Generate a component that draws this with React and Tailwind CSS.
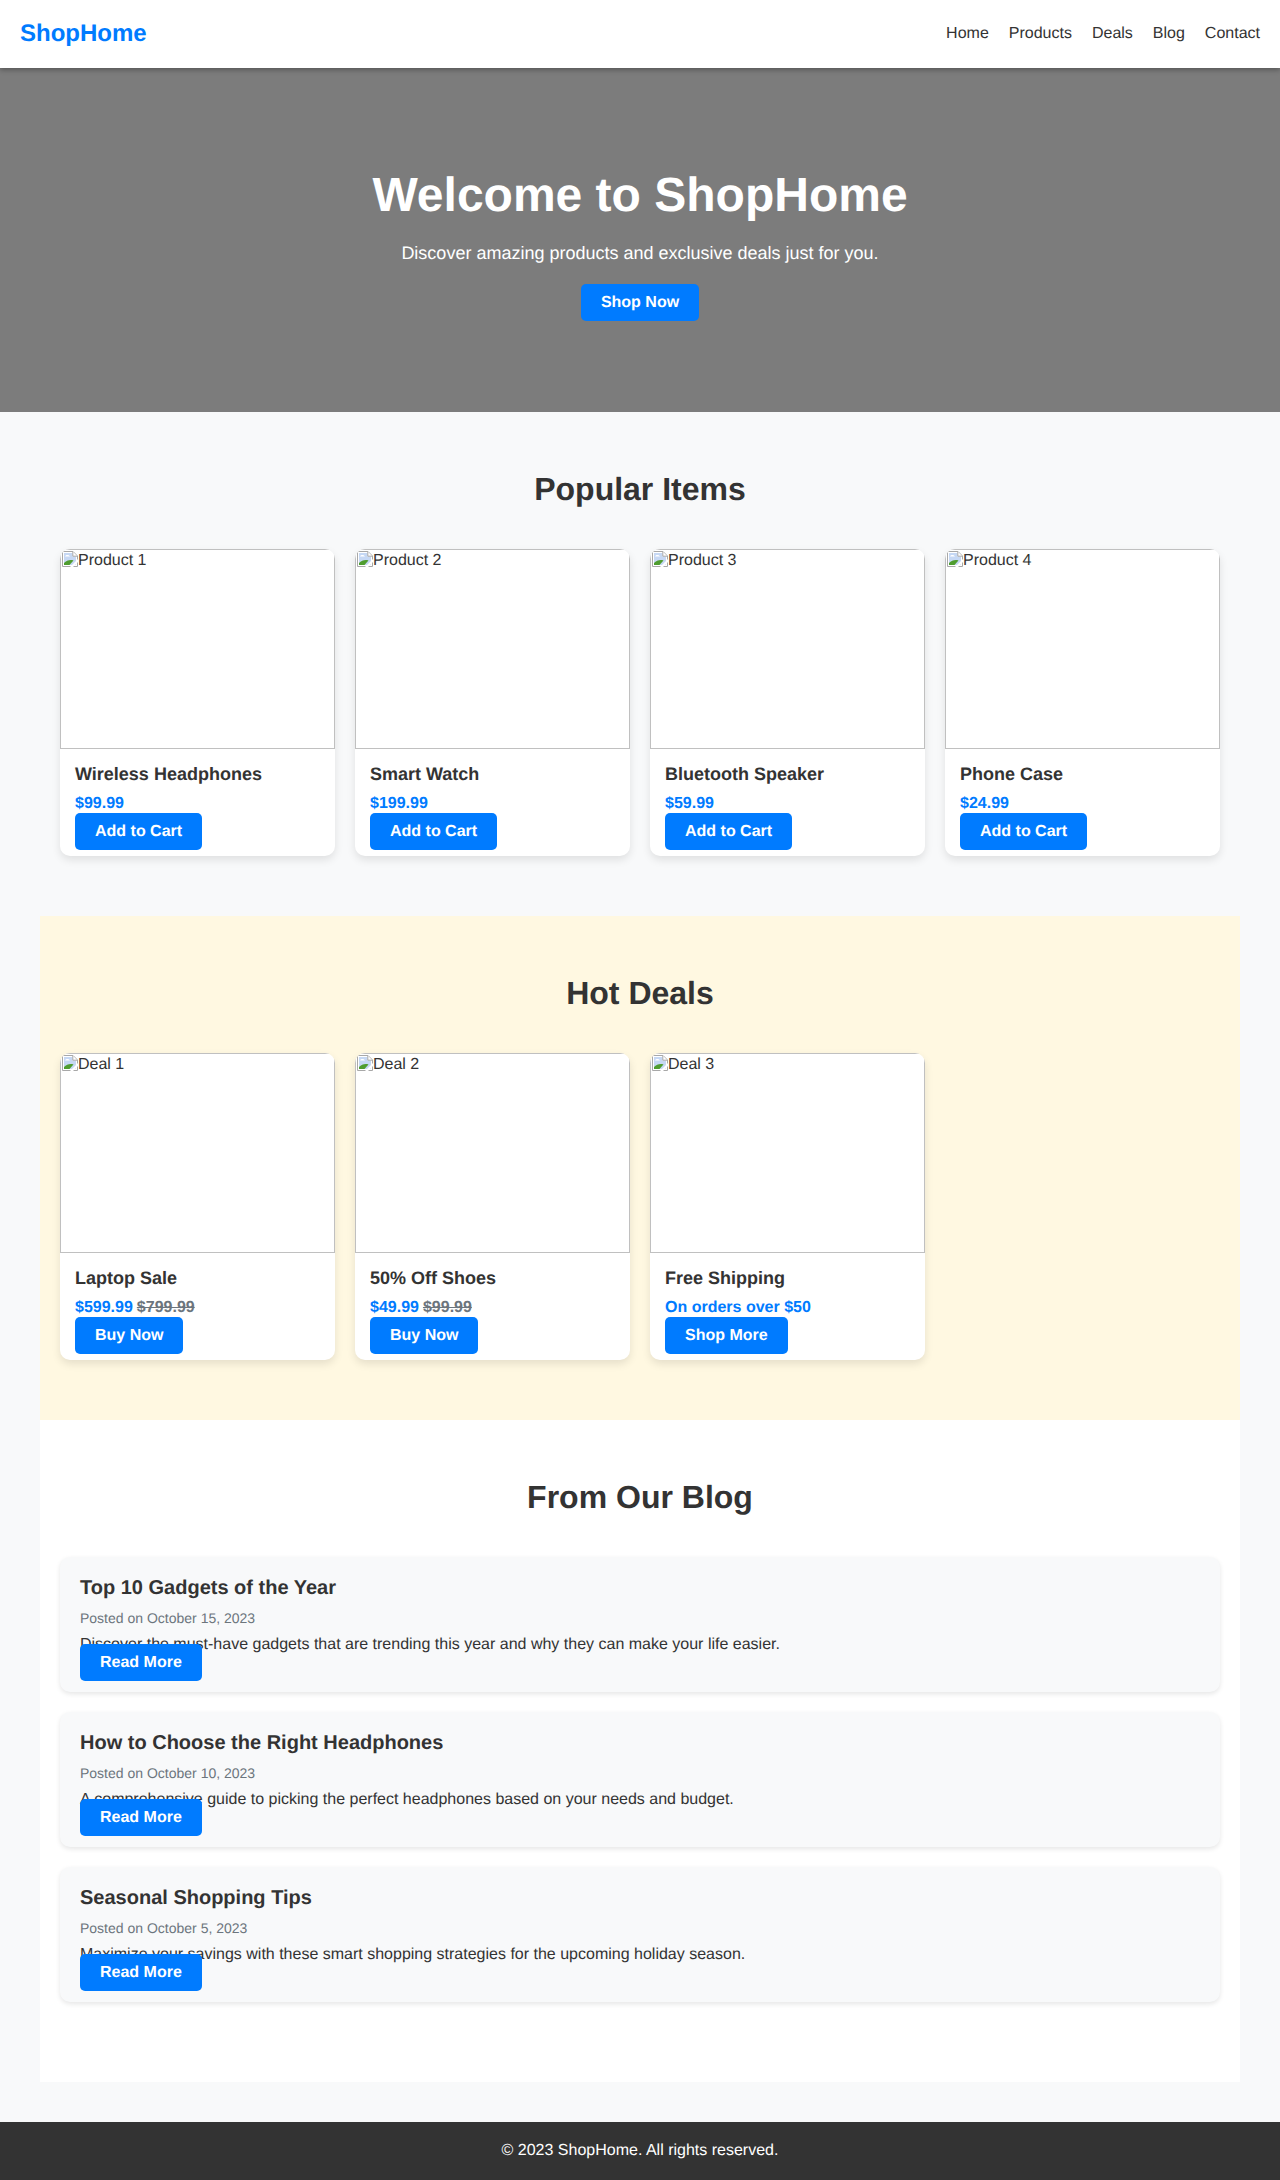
const navLinks = ["Home", "Products", "Deals", "Blog", "Contact"];

const products = [
  { alt: "Product 1", title: "Wireless Headphones", price: "$99.99", action: "Add to Cart" },
  { alt: "Product 2", title: "Smart Watch", price: "$199.99", action: "Add to Cart" },
  { alt: "Product 3", title: "Bluetooth Speaker", price: "$59.99", action: "Add to Cart" },
  { alt: "Product 4", title: "Phone Case", price: "$24.99", action: "Add to Cart" },
];

const deals = [
  { alt: "Deal 1", title: "Laptop Sale", price: "$599.99", oldPrice: "$799.99", action: "Buy Now" },
  { alt: "Deal 2", title: "50% Off Shoes", price: "$49.99", oldPrice: "$99.99", action: "Buy Now" },
  { alt: "Deal 3", title: "Free Shipping", price: "On orders over $50", action: "Shop More" },
];

const posts = [
  {
    title: "Top 10 Gadgets of the Year",
    date: "Posted on October 15, 2023",
    text: "Discover the must-have gadgets that are trending this year and why they can make your life easier.",
  },
  {
    title: "How to Choose the Right Headphones",
    date: "Posted on October 10, 2023",
    text: "A comprehensive guide to picking the perfect headphones based on your needs and budget.",
  },
  {
    title: "Seasonal Shopping Tips",
    date: "Posted on October 5, 2023",
    text: "Maximize your savings with these smart shopping strategies for the upcoming holiday season.",
  },
];

const BrokenImageIcon = () => (
  <svg width="16" height="16" viewBox="0 0 16 16" className="shrink-0">
    <path d="M0.5 0.5H11L15.5 5V15.5H0.5Z" fill="#fff" stroke="#a8a8a8" />
    <path d="M2 2H10.5V5.5H14V14H2Z" fill="#c6d8f4" />
    <path d="M3 5.5C4 3.6 6.5 3.6 8 5.5Z" fill="#fff" />
    <path d="M2 14V12C4.5 9.5 8 8.5 11.5 9.5L7.5 14Z" fill="#4f9d2f" />
    <path d="M16 8L8 16H11L16 11Z" fill="#fff" />
    <path d="M10.8 0.8V5.2H15.2" fill="#fff" stroke="#a8a8a8" />
  </svg>
);

const ActionButton = ({ label, className = "" }) => (
  <a className={`flex h-[37px] w-fit items-center rounded-[5px] bg-[#007bff] px-5 text-base font-bold text-white ${className}`}>
    {label}
  </a>
);

const ItemCard = ({ item }) => (
  <div className="overflow-hidden rounded-[10px] bg-white shadow-[0_4px_8px_rgba(0,0,0,0.1)]">
    <div className="flex h-[200px] items-start border border-[#c0c0c0] pl-px pt-px text-base leading-5 text-[#333]">
      <BrokenImageIcon />
      <span>{item.alt}</span>
    </div>
    <div className="px-[15px] pt-[14px] pb-1.5">
      <h3 className="text-lg leading-[22px] font-bold text-[#333]">{item.title}</h3>
      <p className="mt-2.5 text-base leading-[18px] font-bold text-[#007bff]">
        {item.price}
        {item.oldPrice && <span className="ml-1 text-[#6c757d] line-through">{item.oldPrice}</span>}
      </p>
      <ActionButton label={item.action} />
    </div>
  </div>
);

const SectionTitle = ({ children }) => (
  <h2 className="mb-[34px] text-center text-[32px] leading-[51px] font-bold text-[#333]">{children}</h2>
);

const BlogPost = ({ post }) => (
  <article className="rounded-[10px] bg-[#f8f9fa] px-5 pt-5 pb-[11px] shadow-[0_2px_5px_rgba(0,0,0,0.1)]">
    <h3 className="text-xl leading-[23px] font-bold text-[#333]">{post.title}</h3>
    <p className="mt-[7px] text-sm leading-[22px] text-[#6c757d]">{post.date}</p>
    <p className="mt-[3px] text-base leading-[26px] text-[#333]">{post.text}</p>
    <ActionButton label="Read More" className="relative -mt-[14px]" />
  </article>
);

export default function App() {
  return (
    <div className="min-h-[2180px] bg-[#f8f9fa] font-['Liberation_Sans',Arial,sans-serif] text-[#333] [text-rendering:geometricPrecision]">
      <header className="relative z-10 flex h-[68px] items-center justify-between bg-white px-5 shadow-[0_2px_5px_rgba(0,0,0,0.3)]">
        <div className="text-2xl font-bold text-[#007bff]">ShopHome</div>
        <nav className="flex gap-5">
          {navLinks.map((link) => (
            <a key={link} className="text-base text-[#333]">{link}</a>
          ))}
        </nav>
      </header>

      <section className="flex h-[344px] flex-col items-center bg-[#7c7c7c] pt-[99px] text-white">
        <h1 className="text-5xl leading-[58px] font-bold">Welcome to ShopHome</h1>
        <p className="mt-3 text-lg leading-8">Discover amazing products and exclusive deals just for you.</p>
        <ActionButton label="Shop Now" className="mt-[15px]" />
      </section>

      <main className="mx-auto w-[1200px]">
        <section className="px-5 pt-[52px] pb-[60px]">
          <SectionTitle>Popular Items</SectionTitle>
          <div className="grid grid-cols-4 gap-5">
            {products.map((item) => <ItemCard key={item.alt} item={item} />)}
          </div>
        </section>

        <section className="bg-[#fff8e1] px-5 pt-[52px] pb-[60px]">
          <SectionTitle>Hot Deals</SectionTitle>
          <div className="grid grid-cols-4 gap-5">
            {deals.map((item) => <ItemCard key={item.alt} item={item} />)}
          </div>
        </section>

        <section className="bg-white px-5 pt-[52px] pb-20">
          <SectionTitle>From Our Blog</SectionTitle>
          <div className="flex flex-col gap-5">
            {posts.map((post) => <BlogPost key={post.title} post={post} />)}
          </div>
        </section>
      </main>

      <footer className="mt-10 flex h-[58px] items-center justify-center bg-[#333] text-base text-white">
        © 2023 ShopHome. All rights reserved.
      </footer>
    </div>
  );
}
